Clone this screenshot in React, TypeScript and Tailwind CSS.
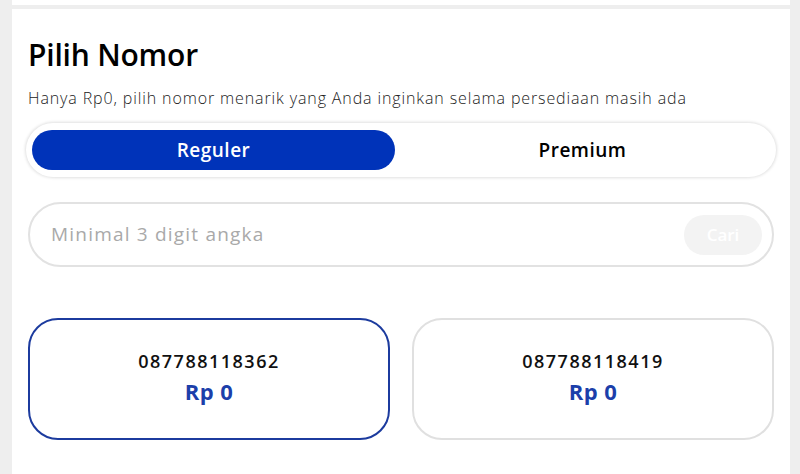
const numbers = [
  { no: "087788118362", price: "Rp 0", active: true },
  { no: "087788118419", price: "Rp 0", active: false },
];

export default function App() {
  return (
    <div
      className="flex h-[474px] w-[800px] flex-col gap-[4px] overflow-hidden bg-[#eeeeee] pl-[12px] pr-[10px]"
      style={{ fontFamily: "'Open Sans', Lato, sans-serif" }}
    >
      {/* tail of the previous card */}
      <div className="h-[5px] shrink-0 bg-white" />

      <section className="flex flex-1 flex-col bg-white px-[16px] pt-[27px]">
        <h1 className="text-[30px] font-semibold leading-[37px] tracking-[-0.2px] text-black">Pilih Nomor</h1>
        <p className="mt-[15px] text-[16px] font-light leading-[20px] tracking-[0.88px] text-[#222]">
          Hanya Rp0, pilih nomor menarik yang Anda inginkan selama persediaan masih ada
        </p>

        {/* Reguler / Premium switch */}
        <div className="-ml-[2px] mt-[15px] flex h-[54px] w-[750px] items-center rounded-full bg-white p-[6px] shadow-[0_0_3px_1px_rgba(0,0,0,0.12)]">
          <button className="h-[40px] w-[363px] rounded-full bg-[#0033b9] text-[19px] font-semibold tracking-[0.5px] text-white">
            Reguler
          </button>
          <button className="h-[40px] flex-1 rounded-full text-[19px] font-semibold tracking-[0.5px] text-black">
            Premium
          </button>
        </div>

        {/* search */}
        <div className="mt-[25px] flex h-[65px] w-[746px] items-center rounded-full border-2 border-[#e2e2e2] pl-[21px] pr-[10px]">
          <input
            className="flex-1 bg-transparent text-[19px] tracking-[1.2px] text-[#333] outline-none placeholder:text-[#a9a9a9]"
            placeholder="Minimal 3 digit angka"
          />
          <button className="h-[40px] w-[78px] rounded-full bg-[#f3f3f3] text-[17px] font-semibold text-white">
            Cari
          </button>
        </div>

        {/* numbers */}
        <div className="mt-[51px] grid w-[746px] grid-cols-2 gap-[22px]">
          {numbers.map((n) => (
            <div
              key={n.no}
              className={
                "flex h-[122px] flex-col items-center justify-center rounded-[30px] border-2 pb-[5px] " +
                (n.active ? "border-[#1c3b9e]" : "border-[#e0e0e0]")
              }
            >
              <span className="text-[18px] font-semibold leading-[22px] tracking-[1.5px] text-[#111]">{n.no}</span>
              <span className="mt-[7px] text-[22px] font-bold leading-[24px] tracking-[0.5px] text-[#1c3faa]">{n.price}</span>
            </div>
          ))}
        </div>
      </section>
    </div>
  );
}
